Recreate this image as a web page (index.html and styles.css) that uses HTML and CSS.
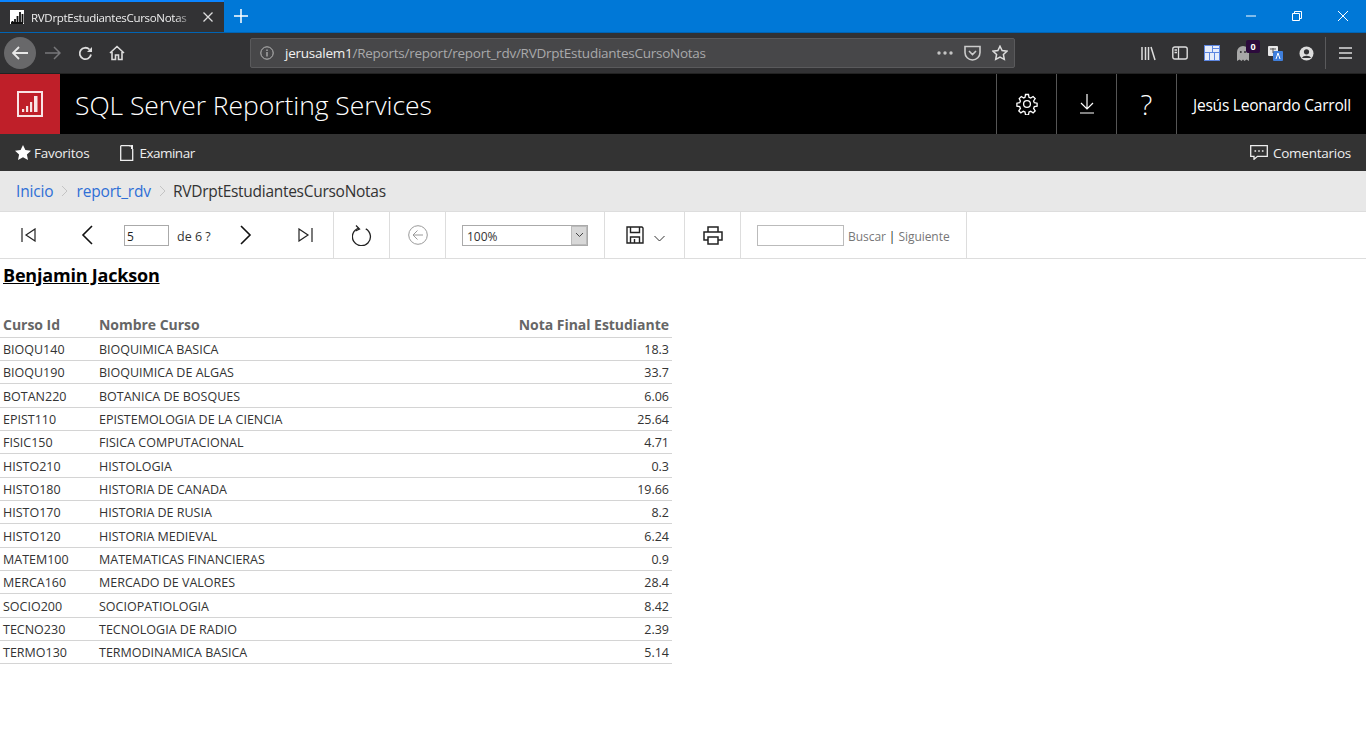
FILE: index.html
```html
<!DOCTYPE html>
<html lang="es">
<head>
<meta charset="utf-8">
<title>RVDrptEstudiantesCursoNotas</title>
<link rel="stylesheet" href="styles.css">
</head>
<body>
<div class="tabbar">
  <div class="tab">
    <svg class="favicon" width="14" height="14" viewBox="0 0 14 14"><rect width="14" height="14" fill="#fff"/><path d="M1 13h12M2.500 13v-2M5 13V9M7.500 13V6M10 13V2M12.500 13V4" stroke="#111" stroke-width="1.800" fill="none"/></svg>
    <span class="tab-title">RVDrptEstudiantesCursoNotas</span>
    <svg class="tab-x" width="10" height="10" viewBox="0 0 10 10"><path d="M.5.500l9 9M9.500.500l-9 9" stroke="#ddd" stroke-width="1.300"/></svg>
  </div>
  <svg class="newtab" width="14" height="14" viewBox="0 0 14 14"><path d="M7 0v14M0 7h14" stroke="#fff" stroke-width="1.500"/></svg>
  <div class="winbtns">
    <svg width="10" height="10" viewBox="0 0 10 10"><path d="M0 5h10" stroke="#fff" stroke-width="1"/></svg>
    <svg width="10" height="10" viewBox="0 0 10 10"><path d="M.5 2.500h7v7h-7zM2.500 2.500v-2h7v7h-2" stroke="#fff" fill="none"/></svg>
    <svg width="10" height="10" viewBox="0 0 10 10"><path d="M0 0l10 10M10 0L0 10" stroke="#fff" stroke-width="1"/></svg>
  </div>
</div>
<div class="navbar">
  <div class="backbtn"><svg width="16" height="14" viewBox="0 0 16 14"><path d="M7 1L1 7l6 6M1 7h15" stroke="#e8e8e8" stroke-width="1.800" fill="none"/></svg></div>
  <svg class="nav-fwd" width="16" height="14" viewBox="0 0 16 14"><path d="M9 1l6 6-6 6M15 7H0" stroke="#77777a" stroke-width="1.500" fill="none"/></svg>
  <svg class="nav-reload" width="15" height="15" viewBox="0 0 15 15"><path d="M13 8.500A5.700 5.700 0 1 1 11.500 3.500" stroke="#ddd" stroke-width="1.800" fill="none"/><path d="M14 1v5H9z" fill="#ddd"/></svg>
  <svg class="nav-home" width="16" height="16" viewBox="0 0 16 16"><path d="M1 8l7-6.500L15 8M3 7v7.500h3.500V10h3v4.500H13V7" stroke="#ddd" stroke-width="1.600" fill="none"/></svg>
  <div class="urlbar">
    <svg class="info" width="14" height="14" viewBox="0 0 14 14"><circle cx="7" cy="7" r="6.200" stroke="#bbb" fill="none"/><path d="M7 6v4.500M7 3.500v1.500" stroke="#bbb" stroke-width="1.200"/></svg>
    <span class="url"><span class="host">jerusalem1</span>/Reports/report/report_rdv/RVDrptEstudiantesCursoNotas</span>
    <svg class="dots" width="16" height="4" viewBox="0 0 16 4"><circle cx="2" cy="2" r="1.700" fill="#c4c4c4"/><circle cx="8" cy="2" r="1.700" fill="#c4c4c4"/><circle cx="14" cy="2" r="1.700" fill="#c4c4c4"/></svg>
    <svg width="17" height="16" viewBox="0 0 17 16"><path d="M1 1.500h15v6a7.500 7.500 0 0 1-15 0zM5 6l3.500 3.500L12 6" stroke="#ccc" stroke-width="1.600" fill="none"/></svg>
    <svg width="16" height="16" viewBox="0 0 16 16"><path d="M8 1.200l2.100 4.400 4.800.6-3.500 3.300.9 4.800L8 12l-4.300 2.300.9-4.800L1.100 6.200l4.800-.6z" stroke="#ddd" stroke-width="1.500" fill="none"/></svg>
  </div>
  <div class="nav-tools">
    <svg width="15" height="15" viewBox="0 0 15 15"><path d="M1 1v13M4.500 1v13M7.500 1v13M10 1l4 13" stroke="#ddd" stroke-width="1.500" fill="none"/></svg>
    <svg width="16" height="14" viewBox="0 0 16 14"><rect x=".8" y="1" width="14.400" height="12" rx="2" stroke="#ddd" stroke-width="1.400" fill="none"/><path d="M6.500 1v12M2.500 4h2.500M2.500 6.500h2.500" stroke="#ddd" stroke-width="1.300"/></svg>
    <svg width="16" height="16" viewBox="0 0 16 16"><rect width="16" height="16" fill="#5d86e0"/><path d="M1 1h7v6H1zM9 1h6v2H9zM9 4h6v3H9zM1 8h4v7H1zM6 8h4v7H6zM11 8h4v7h-4z" fill="#e6ecfa"/></svg>
    <div class="ghost">
      <svg width="14" height="15" viewBox="0 0 14 15"><path d="M1 15V6a6 6 0 0 1 12 0v9l-2.500-1.500L8.500 15 7 13.500 5.500 15l-2-1.500z" fill="#a8a8a8"/><circle cx="4.800" cy="6" r="1" fill="#323234"/><circle cx="9" cy="6" r="1" fill="#323234"/></svg>
      <span class="badge">0</span>
    </div>
    <svg class="ic-translate" width="15" height="15" viewBox="0 0 15 15"><rect width="10" height="10" rx="1" fill="#e8e8e8"/><rect x="5" y="5" width="10" height="10" rx="1" fill="#3f7fdc"/><path d="M8 13l2-6 2 6" stroke="#fff" fill="none"/><path d="M2 3h6M5 2v5" stroke="#555"/></svg>
    <svg width="15" height="15" viewBox="0 0 15 15"><circle cx="7.500" cy="7.500" r="7" fill="#ddd"/><circle cx="7.500" cy="5.800" r="2.600" fill="#323234"/><path d="M2.800 12a5 3.500 0 0 1 9.400 0z" fill="#323234"/></svg>
    <span class="tool-sep"></span>
    <svg width="13" height="12" viewBox="0 0 13 12"><path d="M0 1h13M0 6h13M0 11h13" stroke="#ddd" stroke-width="1.700"/></svg>
  </div>
</div>
<header class="ssrs-head">
  <div class="logo"><svg width="26" height="26" viewBox="0 0 26 26"><rect x="1" y="1" width="24" height="24" fill="none" stroke="#f8e4e4" stroke-width="2"/><path d="M5 18v3h2.200v-3zM9 15v6h2.200v-6zM13 11v10h2.200V11zM17 5v16h3.500V5z" fill="#f8e4e4"/></svg></div>
  <div class="brand">SQL Server Reporting Services</div>
  <div class="head-btn"><svg width="22" height="22" viewBox="0 0 22 22"><circle cx="11" cy="11" r="3.400" stroke="#fff" stroke-width="1.300" fill="none"/><path d="M9.500 1.500h3l.5 2.800 1.700.8 2.400-1.600 2.100 2.100-1.600 2.400.7 1.700 2.800.5v3l-2.800.5-.7 1.700 1.600 2.400-2.100 2.100-2.400-1.600-1.700.7-.5 2.800h-3l-.5-2.800-1.700-.7-2.400 1.600-2.100-2.100 1.600-2.400-.7-1.700-2.800-.5v-3l2.800-.5.7-1.700L3.200 5.600l2.100-2.100 2.400 1.600 1.300-.8z" stroke="#fff" stroke-width="1.300" fill="none"/></svg></div>
  <div class="head-btn"><svg width="14" height="20" viewBox="0 0 14 20"><path d="M7 0v15M1 9l6 6 6-6M0 19h14" stroke="#fff" stroke-width="1.200" fill="none"/></svg></div>
  <div class="head-btn help">?</div>
  <div class="head-user">Jesús Leonardo Carroll</div>
</header>
<nav class="subnav">
  <svg class="nav-star" width="16" height="15" viewBox="0 0 16 15"><path d="M8 0l2.400 5.100 5.600.7-4.100 3.800 1.100 5.400L8 12.300 3 15l1.100-5.400L0 5.800l5.600-.7z" fill="#fff"/></svg>
  <span class="subnav-item">Favoritos</span>
  <svg class="nav-doc" width="14" height="16" viewBox="0 0 14 16"><path d="M.7.700h9.500v1M.7.700v14.600h12V4" stroke="#eee" stroke-width="1.300" fill="none"/><path d="M11 0h2v4h-2z" fill="#eee"/></svg>
  <span class="subnav-item tight">Examinar</span>
  <span class="subnav-gap"></span>
  <svg class="nav-chat" width="18" height="15" viewBox="0 0 18 15"><path d="M.7.700h16.600v10.600H7.500L4 14.300v-3H.7z" stroke="#eee" stroke-width="1.300" fill="none"/><path d="M4.500 6h1.600M8.200 6h1.600M11.900 6h1.600" stroke="#eee" stroke-width="1.500"/></svg>
  <span class="subnav-item">Comentarios</span>
</nav>
<div class="crumbs">
  <a class="crumb-link">Inicio</a>
  <svg class="crumb-sep" width="7" height="12" viewBox="0 0 7 12"><path d="M1 1l5 5-5 5" stroke="#c4c4c4" fill="none"/></svg>
  <a class="crumb-link">report_rdv</a>
  <svg class="crumb-sep" width="7" height="12" viewBox="0 0 7 12"><path d="M1 1l5 5-5 5" stroke="#c4c4c4" fill="none"/></svg>
  <span class="crumb-cur">RVDrptEstudiantesCursoNotas</span>
</div>
<div class="toolbar">
  <div class="tb-group tb-pages">
    <svg class="ic-first" width="15" height="14" viewBox="0 0 15 14"><path d="M1 0v14M14 1L5 7l9 6z" stroke="#222" stroke-width="1.200" fill="none"/></svg>
    <svg class="ic-prev" width="12" height="20" viewBox="0 0 12 20"><path d="M11 1L2 10l9 9" stroke="#111" stroke-width="1.600" fill="none"/></svg>
    <input class="page-input" value="5" aria-label="Página">
    <span class="page-of">de 6 ?</span>
    <svg class="ic-next" width="12" height="20" viewBox="0 0 12 20"><path d="M1 1l9 9-9 9" stroke="#111" stroke-width="1.600" fill="none"/></svg>
    <svg class="ic-last" width="15" height="14" viewBox="0 0 15 14"><path d="M14 0v14M1 1l9 6-9 6z" stroke="#222" stroke-width="1.200" fill="none"/></svg>
  </div>
  <div class="tb-group tb-icon">
    <svg width="20" height="21" viewBox="0 0 20 21"><path d="M6 3.500a9 9 0 1 0 7 0" stroke="#222" stroke-width="1.300" fill="none" transform="rotate(6 10 11)"/><path d="M4 .500l3.500 3.500L3.500 6" stroke="#222" stroke-width="1.300" fill="none"/></svg>
  </div>
  <div class="tb-group tb-icon">
    <svg width="20" height="20" viewBox="0 0 20 20"><circle cx="10" cy="10" r="9.300" stroke="#9a9a9a" fill="none"/><path d="M9.500 5.500L5 10l4.500 4.500M5 10h10" stroke="#9a9a9a" fill="none"/></svg>
  </div>
  <div class="tb-group tb-zoom">
    <div class="zoom-select"><span class="zoom-val">100%</span><span class="zoom-arrow"><svg width="9" height="6" viewBox="0 0 9 6"><path d="M1 1l3.500 3.500L8 1" stroke="#444" fill="none"/></svg></span></div>
  </div>
  <div class="tb-group tb-save">
    <svg width="18" height="18" viewBox="0 0 18 18"><path d="M1 1h15l1 1v15H1zM4.500 1v5.500h9V1M4.500 17v-6h9v6M8.500 13v4" stroke="#222" stroke-width="1.400" fill="none"/></svg>
    <svg class="save-caret" width="11" height="7" viewBox="0 0 11 7"><path d="M.5 1l5 5 5-5" stroke="#333" fill="none"/></svg>
  </div>
  <div class="tb-group tb-icon">
    <svg width="20" height="19" viewBox="0 0 20 19"><path d="M5 6V1h10v5M5 14H1V6h18v8h-4M5 11h10v7H5z" stroke="#222" stroke-width="1.500" fill="none"/></svg>
  </div>
  <div class="tb-group tb-search">
    <input class="search-input" aria-label="Buscar">
    <span class="tb-link">Buscar</span><span class="tb-bar">|</span><span class="tb-link">Siguiente</span>
  </div>
</div>
<main class="report">
  <h1 class="student">Benjamin Jackson</h1>
  <div class="grades">
    <div class="row head"><span>Curso Id</span><span>Nombre Curso</span><span class="num">Nota Final Estudiante</span></div>
    <div class="row"><span>BIOQU140</span><span>BIOQUIMICA BASICA</span><span class="num">18.3</span></div>
    <div class="row"><span>BIOQU190</span><span>BIOQUIMICA DE ALGAS</span><span class="num">33.7</span></div>
    <div class="row"><span>BOTAN220</span><span>BOTANICA DE BOSQUES</span><span class="num">6.06</span></div>
    <div class="row"><span>EPIST110</span><span>EPISTEMOLOGIA DE LA CIENCIA</span><span class="num">25.64</span></div>
    <div class="row"><span>FISIC150</span><span>FISICA COMPUTACIONAL</span><span class="num">4.71</span></div>
    <div class="row"><span>HISTO210</span><span>HISTOLOGIA</span><span class="num">0.3</span></div>
    <div class="row"><span>HISTO180</span><span>HISTORIA DE CANADA</span><span class="num">19.66</span></div>
    <div class="row"><span>HISTO170</span><span>HISTORIA DE RUSIA</span><span class="num">8.2</span></div>
    <div class="row"><span>HISTO120</span><span>HISTORIA MEDIEVAL</span><span class="num">6.24</span></div>
    <div class="row"><span>MATEM100</span><span>MATEMATICAS FINANCIERAS</span><span class="num">0.9</span></div>
    <div class="row"><span>MERCA160</span><span>MERCADO DE VALORES</span><span class="num">28.4</span></div>
    <div class="row"><span>SOCIO200</span><span>SOCIOPATIOLOGIA</span><span class="num">8.42</span></div>
    <div class="row"><span>TECNO230</span><span>TECNOLOGIA DE RADIO</span><span class="num">2.39</span></div>
    <div class="row"><span>TERMO130</span><span>TERMODINAMICA BASICA</span><span class="num">5.14</span></div>
  </div>
</main>
</body>
</html>
```
FILE: styles.css
```css
* { box-sizing: border-box; }
html, body { margin: 0; height: 100%; overflow: hidden; background: #fff; }
body { font-family: "Open Sans", "Noto Sans", sans-serif; color: #222; }
svg { display: block; flex: none; }

.tabbar { height: 32px; background: #0078d7; display: flex; align-items: center; color: #fff; }
.tab { width: 224px; height: 32px; background: #323234; border-top: 2px solid #0a84ff; display: flex; align-items: center; padding: 0 9px 0 10px; }
.favicon { margin-right: 7px; }
.tab-title { flex: 1; font-size: 11.500px; letter-spacing: -.3px; color: #eee; white-space: nowrap; overflow: hidden; -webkit-mask-image: linear-gradient(to right, #000 88%, transparent); mask-image: linear-gradient(to right, #000 88%, transparent); }
.tab-x { margin-left: 8px; margin-right: 2px; }
.newtab { margin-left: 10px; }
.winbtns { margin-left: auto; display: flex; gap: 36px; padding-right: 18px; align-items: center; }

.navbar { height: 41px; background: #323234; border-top: 1px solid #0064b4; display: flex; align-items: center; }
.backbtn { width: 32px; height: 32px; border-radius: 50%; background: #68686a; margin-left: 4px; display: flex; align-items: center; justify-content: center; }
.nav-fwd { margin-left: 9px; }
.nav-reload { margin-left: 17px; }
.nav-home { margin-left: 16px; }
.urlbar { width: 765px; height: 30px; margin-left: 125px; background: #474749; border: 1px solid #5a5a5c; border-radius: 2px; display: flex; align-items: center; padding: 0 6px 0 9px; gap: 11px; }
.info { flex: none; }
.url { flex: 1; font-size: 13.500px; letter-spacing: -.25px; color: #a9a9ab; white-space: nowrap; }
.host { color: #f2f2f2; }
.nav-tools { margin-left: 126px; display: flex; align-items: center; gap: 16px; }
.ghost { position: relative; }
.badge { position: absolute; left: 10px; top: -6px; width: 14px; height: 13px; border-radius: 2px; background: #2c0a3c; color: #fff; font-size: 9px; font-weight: 700; line-height: 13px; text-align: center; }
.ic-translate { margin-left: 2px; }
.tool-sep { width: 1px; height: 32px; background: #5a5a5c; margin: 0 -3px 0 -5px; }

.ssrs-head { height: 61px; background: #000; border-top: 1px solid #222; display: flex; align-items: stretch; color: #fff; }
.logo { width: 60px; background: #bf1f29; display: flex; align-items: center; justify-content: center; }
.brand { flex: 1; padding: 1px 0 0 15px; font-size: 26.500px; line-height: 60px; font-weight: 300; letter-spacing: -.06px; white-space: nowrap; }
.head-btn { width: 60px; border-left: 1px solid #555; display: flex; align-items: center; justify-content: center; }
.help { font-size: 28px; font-weight: 300; }
.head-user { width: 190px; border-left: 1px solid #555; padding: 1px 0 0 16px; font-size: 15.500px; letter-spacing: -.22px; line-height: 60px; white-space: nowrap; }

.subnav { height: 37px; background: #333; color: #eee; display: flex; align-items: center; padding: 0 15px; font-size: 13.500px; letter-spacing: -.25px; }
.nav-star { margin-right: 3px; }
.nav-doc { margin-left: 31px; margin-right: 5px; }
.tight { letter-spacing: -.5px; }
.subnav-gap { flex: 1; }
.nav-chat { margin-right: 5px; }

.crumbs { height: 41px; background: #e8e8e8; border-bottom: 1px solid #ddd; display: flex; align-items: center; padding-left: 16px; font-size: 15.500px; letter-spacing: -.28px; }
.crumb-link { color: #2f6fd6; letter-spacing: -.16px; }
.crumb-sep { margin: 0 8px; }
.crumb-cur { color: #333; margin-left: -1px; }

.toolbar { height: 47px; border-bottom: 1px solid #ddd; display: flex; align-items: stretch; }
.tb-group { border-right: 1px solid #ddd; display: flex; align-items: center; }
.tb-pages { width: 334px; padding-left: 21px; }
.ic-prev { margin-left: 45px; }
.page-input { width: 45px; height: 21px; margin-left: 31px; border: 1px solid #aaa; padding: 2px 2px 0; font: 12px "Open Sans", sans-serif; color: #222; outline: none; }
.page-of { margin-left: 8px; padding-top: 2px; font-size: 12.500px; color: #333; }
.ic-next { margin-left: 29px; }
.ic-last { margin-left: 46px; }
.tb-icon { width: 56px; justify-content: center; }
.tb-zoom { width: 159px; padding-left: 16px; }
.zoom-select { width: 126px; height: 21px; border: 1px solid #aaa; display: flex; align-items: center; justify-content: space-between; font-size: 12px; padding-left: 4px; }
.zoom-val { color: #333; padding-top: 2px; }
.zoom-arrow { width: 16px; height: 19px; background: #d8d8d8; border: 1px solid #bbb; display: flex; align-items: center; justify-content: center; }
.tb-save { width: 80px; padding-left: 21px; }
.save-caret { margin-left: 10px; margin-top: 7px; }
.tb-search { width: 226px; padding-left: 16px; font-size: 12px; letter-spacing: -.05px; color: #777; }
.search-input { width: 87px; height: 21px; border: 1px solid #bbb; margin-right: 4px; outline: none; }
.tb-link { padding-top: 3px; }
.tb-bar { color: #222; margin: 0 3px; padding-top: 3px; }

.report { padding: 5px 0 0 0; }
.student { margin: 0 0 26px 3px; font-size: 18px; line-height: 22px; font-weight: 700; letter-spacing: -.2px; color: #000; text-decoration: underline; }
.grades { width: 672px; }
.row { height: 23.330px; padding: 1px 3px 0; display: grid; grid-template-columns: 96px 1fr auto; align-items: center; border-bottom: 1px solid #d4d4d4; font-size: 12.500px; color: #333; white-space: nowrap; }
.row.head { height: 25.800px; padding-top: 0; font-size: 14px; font-weight: 700; letter-spacing: -.03px; color: #666; }
.num { text-align: right; }
```
